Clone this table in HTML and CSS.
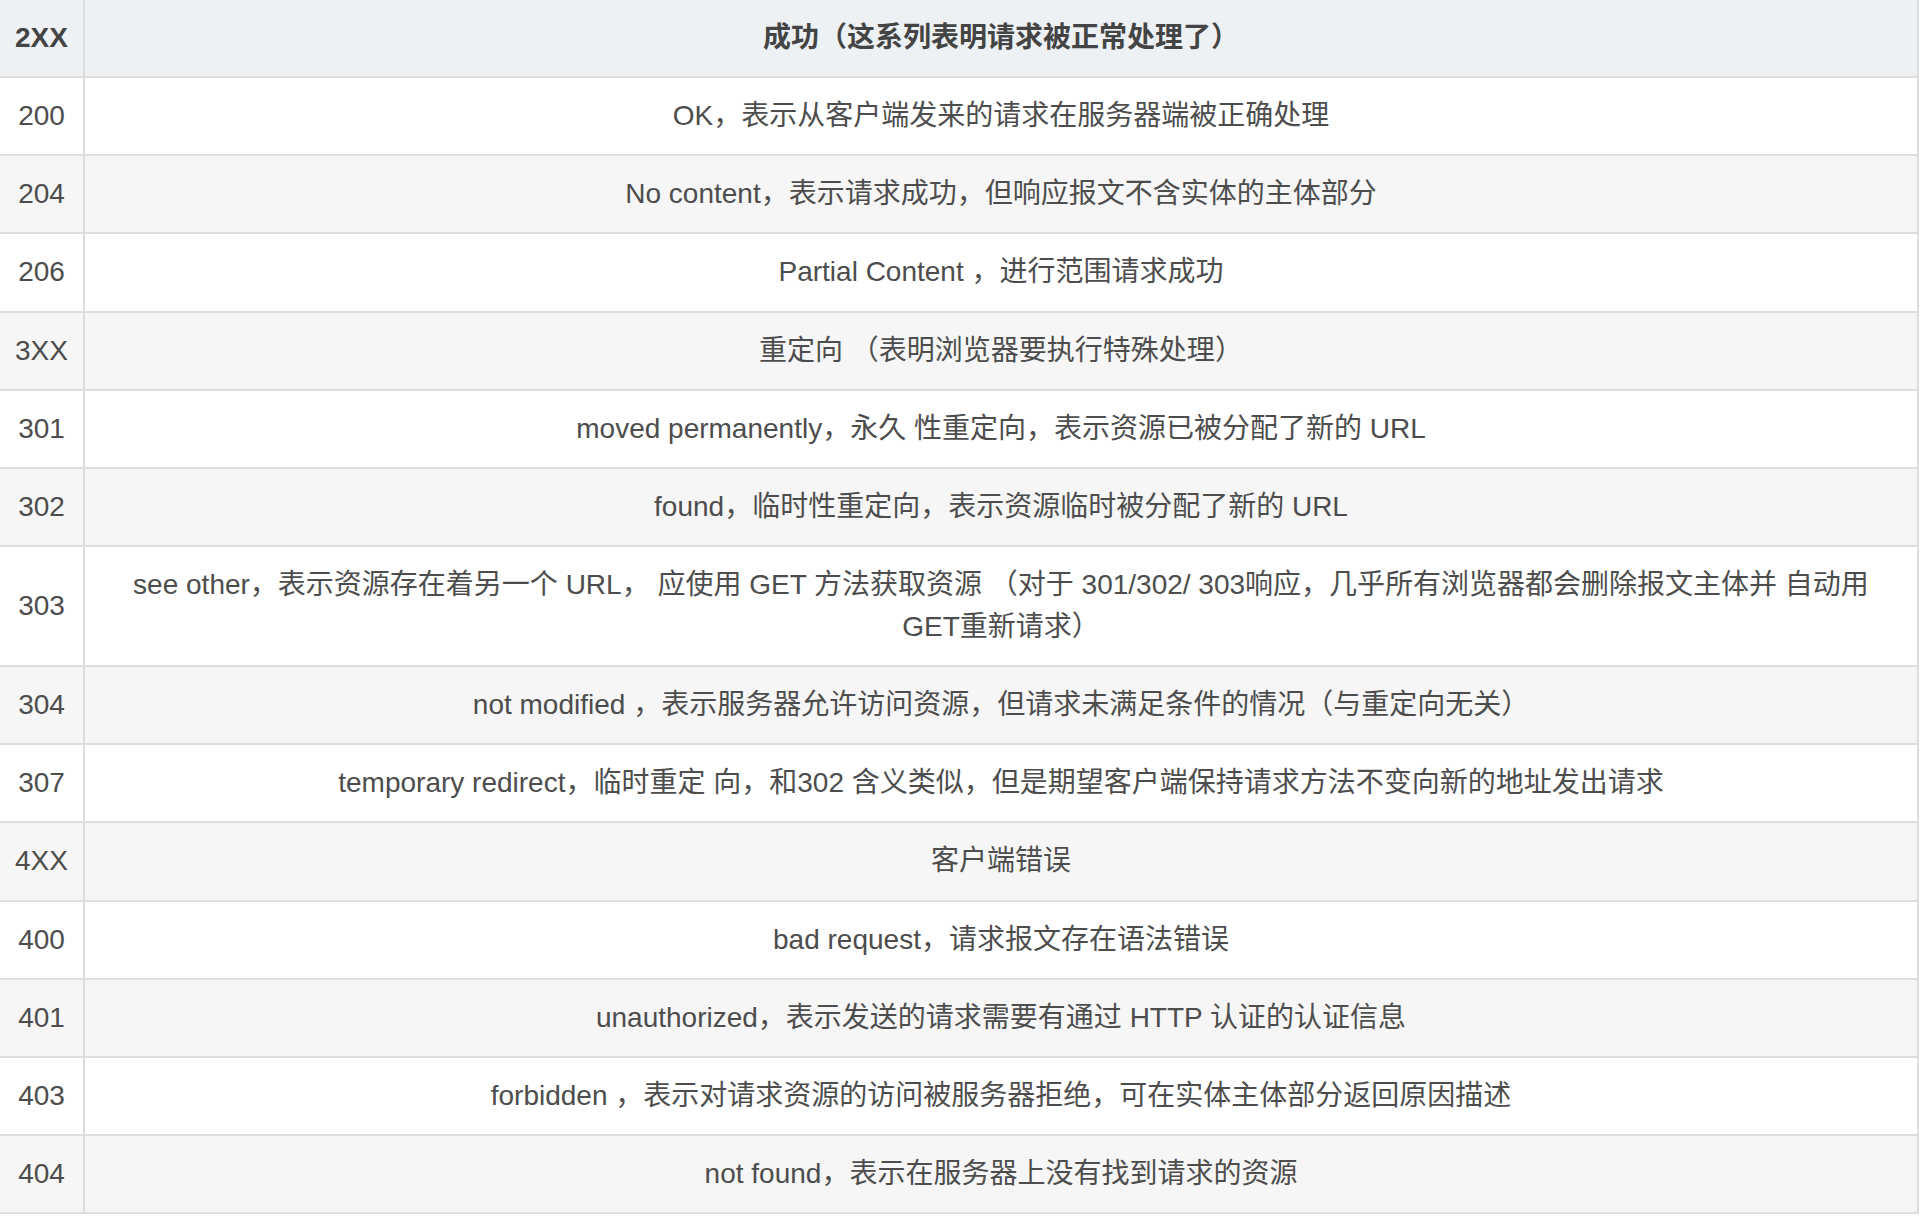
FILE: index.html
```html
<!DOCTYPE html>
<html lang="zh-CN">
<head>
<meta charset="utf-8">
<title>HTTP 状态码</title>
<link rel="stylesheet" href="styles.css">
</head>
<body>
<table class="codes">
  <thead>
    <tr><th class="code">2XX</th><th class="desc">成功（这系列表明请求被正常处理了）</th></tr>
  </thead>
  <tbody>
    <tr><td class="code">200</td><td class="desc">OK，表示从客户端发来的请求在服务器端被正确处理</td></tr>
    <tr><td class="code">204</td><td class="desc">No content，表示请求成功，但响应报文不含实体的主体部分</td></tr>
    <tr><td class="code">206</td><td class="desc">Partial Content ，进行范围请求成功</td></tr>
    <tr><td class="code">3XX</td><td class="desc">重定向 （表明浏览器要执行特殊处理）</td></tr>
    <tr><td class="code">301</td><td class="desc">moved permanently，永久 性重定向，表示资源已被分配了新的 URL</td></tr>
    <tr><td class="code">302</td><td class="desc">found，临时性重定向，表示资源临时被分配了新的 URL</td></tr>
    <tr><td class="code">303</td><td class="desc">see other，表示资源存在着另一个 URL， 应使用 GET 方法获取资源 （对于 301/302/ 303响应，几乎所有浏览器都会删除报文主体并 自动用 GET重新请求）</td></tr>
    <tr><td class="code">304</td><td class="desc">not modified ，表示服务器允许访问资源，但请求未满足条件的情况（与重定向无关）</td></tr>
    <tr><td class="code">307</td><td class="desc">temporary redirect，临时重定 向，和302 含义类似，但是期望客户端保持请求方法不变向新的地址发出请求</td></tr>
    <tr><td class="code">4XX</td><td class="desc">客户端错误</td></tr>
    <tr><td class="code">400</td><td class="desc">bad request，请求报文存在语法错误</td></tr>
    <tr><td class="code">401</td><td class="desc">unauthorized，表示发送的请求需要有通过 HTTP 认证的认证信息</td></tr>
    <tr><td class="code">403</td><td class="desc">forbidden ，表示对请求资源的访问被服务器拒绝，可在实体主体部分返回原因描述</td></tr>
    <tr><td class="code">404</td><td class="desc">not found，表示在服务器上没有找到请求的资源</td></tr>
  </tbody>
</table>
</body>
</html>
```
FILE: styles.css
```css
html, body {
  margin: 0;
  padding: 0;
  background: #ffffff;
}

body {
  font-family: "Liberation Sans", "Noto Sans CJK SC", sans-serif;
  color: #4d4d4d;
  font-size: 28px;
}

.codes {
  border-collapse: collapse;
  width: 1919px;
  table-layout: fixed;
}

.codes th,
.codes td {
  border: 2px solid #dddddd;
  line-height: 42px;
  padding: 17px 40px 17.15px;
  text-align: center;
  vertical-align: middle;
}

.codes thead th {
  border-top: none;
  background: #eef1f4;
  font-weight: bold;
  color: #444444;
}

.codes .code {
  width: 83px;
  padding-left: 0;
  padding-right: 0;
  border-left: none;
}

.codes tbody tr:nth-child(even) {
  background: #f6f6f6;
}
```
